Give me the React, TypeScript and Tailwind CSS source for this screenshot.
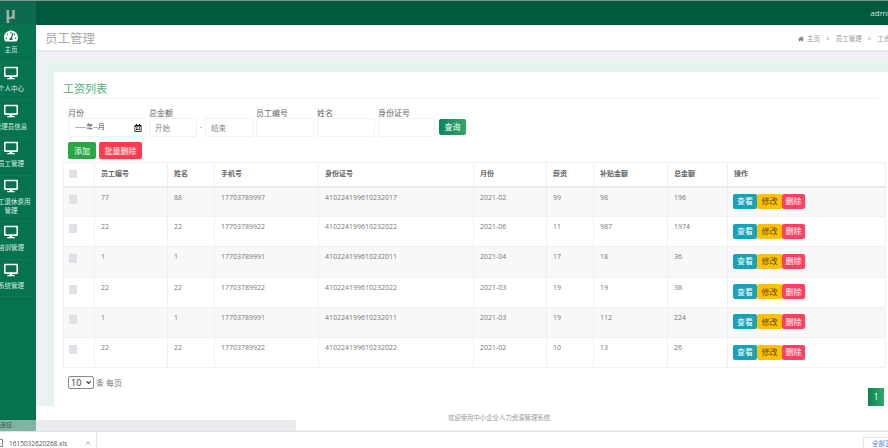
import { ChevronDown, ChevronUp } from 'lucide-react';
import { FaDesktop, FaHome, FaTachometerAlt, FaRegCalendarAlt } from 'react-icons/fa';

const font = { fontFamily: '"Open Sans", "Noto Sans CJK SC", sans-serif' };

const menu = ['个人中心', '管理员信息', '员工管理', '职工退休费用管理', '培训管理', '系统管理'];

const rows = [
  ['77', '88', '17703789997', '410224199610232017', '2021-02', '99', '98', '196'],
  ['22', '22', '17703789922', '410224199610232022', '2021-06', '11', '987', '1974'],
  ['1', '1', '17703789991', '410224199610232011', '2021-04', '17', '18', '36'],
  ['22', '22', '17703789922', '410224199610232022', '2021-03', '19', '19', '38'],
  ['1', '1', '17703789991', '410224199610232011', '2021-03', '19', '112', '224'],
  ['22', '22', '17703789922', '410224199610232022', '2021-02', '10', '13', '26'],
];

const heads = ['员工编号', '姓名', '手机号', '身份证号', '月份', '薪资', '补贴金额', '总金额', '操作'];
const widths = [31, 73, 47, 104, 155, 73, 47, 74, 60, 158];

function Label({ text }: { text: string }) {
  return <span className="block h-[11px] text-[8px] leading-[11px] text-[#666]">{text}</span>;
}

function TextInput({ placeholder, className }: { placeholder?: string; className: string }) {
  return (
    <input
      placeholder={placeholder}
      className={`block h-[19px] rounded-[2px] border border-[#eef4f1] px-[5px] text-[7.5px] outline-none placeholder:text-[#888] ${className}`}
    />
  );
}

export default function App() {
  return (
    <div className="relative flex h-[448px] w-[888px] flex-col overflow-hidden bg-white" style={font}>
      <div className="h-[1px] shrink-0 bg-[#7f9a90]" />
      <div className="flex h-[430px]">
        <aside className="w-[36px] shrink-0 overflow-hidden bg-[#06724f]">
          <div className="flex h-[24px] items-center justify-center bg-[#0d6a4f] pr-[15px] text-[16px] font-bold text-[#a3b3ab]">
            μ
          </div>
          <nav className="-ml-[9px] w-[40px] text-[6.5px] leading-[9px] text-[#d8ede4]">
            <div className="flex flex-col items-center border-b border-white/5 pt-[4px] pb-[8px] text-white">
              <FaTachometerAlt size={14} />
              <span className="mt-[2px] text-center text-[#d8ede4]">主页</span>
            </div>
            {menu.map((label) => (
              <div key={label} className="flex flex-col items-center border-b border-white/5 pt-[3px] pb-[6.5px] text-white">
                <FaDesktop size={14} />
                <span className="mt-[4px] text-center text-[#d8ede4]">{label}</span>
              </div>
            ))}
          </nav>
        </aside>

        <div className="flex min-w-0 flex-1 flex-col">
          <header className="flex h-[24px] shrink-0 items-center justify-end bg-[#005a3e] text-[8px] text-[#d7e6df]">
            <span className="-mr-[6px]">admin</span>
          </header>
          <div className="flex h-[27px] shrink-0 items-center justify-between border-b-2 border-[#e8e9ee] bg-white pl-[9px]">
            <h1 className="pt-[3px] text-[12.5px] font-normal text-[#a9a9a9]">员工管理</h1>
            <div className="flex w-[90px] shrink-0 items-center gap-[6px] overflow-hidden pt-[2px] whitespace-nowrap text-[6.5px] text-[#999]">
              <span className="flex items-center gap-[3px]">
                <FaHome size={6} className="text-[#777]" />
                主页
              </span>
              <span>&gt;</span>
              <span>员工管理</span>
              <span>&gt;</span>
              <span>工资列表</span>
            </div>
          </div>

          <div className="flex-1 overflow-hidden bg-[#eef0f4] pt-[9px] pl-[10px]">
            <div className="h-[345px] bg-[#e6f3ec] pt-[11px] pl-[8px]">
              <div className="h-[334px] bg-white px-[9px] pt-[9px]">
                <h2 className="border-b border-[#f4f4f4] pb-[2px] text-[11px] leading-[15px] font-normal text-[#4fb07c]">
                  工资列表
                </h2>
                <div className="mt-[8px] flex items-end pl-[5px]">
                  <div className="w-[78px]">
                    <Label text="月份" />
                    <div className="flex h-[19px] items-center justify-between rounded-[2px] border border-[#eef4f1] pr-[3px] pl-[6px] text-[7px] text-[#444]">
                      -----年--月
                      <FaRegCalendarAlt size={8} className="text-black" />
                    </div>
                  </div>
                  <div className="ml-[3px] w-[48px]">
                    <Label text="总金额" />
                    <TextInput placeholder="开始" className="w-full" />
                  </div>
                  <span className="w-[8px] pb-[5px] text-center text-[7px] text-[#888]">-</span>
                  <TextInput placeholder="结束" className="w-[49px]" />
                  <div className="ml-[2px] w-[58px]">
                    <Label text="员工编号" />
                    <TextInput className="w-full" />
                  </div>
                  <div className="ml-[3px] w-[58px]">
                    <Label text="姓名" />
                    <TextInput className="w-full" />
                  </div>
                  <div className="ml-[3px] w-[57px]">
                    <Label text="身份证号" />
                    <TextInput className="w-full" />
                  </div>
                  <button className="mb-[2px] ml-[4px] h-[16px] w-[27px] rounded-[2px] bg-gradient-to-r from-[#0b8457] to-[#2fa868] text-[8px] text-white">
                    查询
                  </button>
                </div>
                <div className="mt-[5px] flex gap-[3px] pl-[5px]">
                  <button className="h-[17px] w-[28px] rounded-[2px] bg-[#28a745] text-[8px] text-white">添加</button>
                  <button className="h-[17px] w-[43px] rounded-[2px] bg-[#ff3b50] text-[8px] text-white">批量删除</button>
                </div>

                <table className="mt-[3px] w-[822px] table-fixed border-collapse text-[7px] text-[#777]">
                  <colgroup>
                    {widths.map((w, i) => (
                      <col key={i} style={{ width: w }} />
                    ))}
                  </colgroup>
                  <thead>
                    <tr className="h-[24px] border-b-2 border-[#e8eaef] text-[#666]">
                      <th className="border border-[#eef0f2] pt-[7px] pl-[5px] text-left align-top">
                        <span className="block h-[8px] w-[8px] bg-[#dee1e6]" />
                      </th>
                      {heads.map((h) => (
                        <th key={h} className="border border-[#eef0f2] pl-[6px] text-left font-semibold">
                          {h}
                        </th>
                      ))}
                    </tr>
                  </thead>
                  <tbody>
                    {rows.map((r, i) => (
                      <tr key={i} className={`h-[30.2px] ${i % 2 === 0 ? 'bg-[#f8f8f8]' : 'bg-white'}`}>
                        <td className="border border-[#eef0f2] pt-[7px] pl-[5px] align-top">
                          <span className="block h-[9px] w-[8px] bg-[#dee1e6]" />
                        </td>
                        {r.map((c, j) => (
                          <td key={j} className="border border-[#eef0f2] pt-[5px] pl-[6px] align-top leading-[10px]">
                            {c}
                          </td>
                        ))}
                        <td className="border border-[#eef0f2] pb-[1px] pl-[5px] align-middle">
                          <div className="flex text-[8px]">
                            <span className="flex h-[15px] w-[24px] items-center justify-center rounded-[2px] bg-[#17a2b8] text-white">查看</span>
                            <span className="flex h-[15px] w-[25px] items-center justify-center rounded-[2px] bg-[#ffc107] text-[#5a4a10]">修改</span>
                            <span className="flex h-[15px] w-[23px] items-center justify-center rounded-[2px] bg-[#ff4060] text-white">删除</span>
                          </div>
                        </td>
                      </tr>
                    ))}
                  </tbody>
                </table>

                <div className="mt-[8px] flex w-[822px] items-start justify-between pl-[5px]">
                  <div className="flex items-center gap-[2px] text-[8px] text-[#777]">
                    <span className="relative block h-[13px] w-[26px]">
                      <select className="block h-full w-full appearance-none rounded-[2px] border border-[#888] pl-[2px] text-[9px] leading-[11px] text-[#333] outline-none">
                        <option>10</option>
                      </select>
                      <ChevronDown size={7} strokeWidth={3.5} className="absolute top-[3px] right-[2px] text-[#222]" />
                    </span>
                    条 每页
                  </div>
                  <span className="mt-[12px] mr-[1px] flex h-[18px] w-[16px] items-center justify-center bg-gradient-to-r from-[#0b8457] to-[#2fa868] text-[9px] text-white">
                    1
                  </span>
                </div>
              </div>
            </div>
            <footer className="-ml-[10px] flex h-[24px] items-center justify-center bg-white pl-[74px] text-[6.4px] text-[#999]">
              欢迎使用中小企业人力资源管理系统
            </footer>
          </div>
        </div>
      </div>

      <div className="absolute top-[419.5px] left-0 flex h-[11px] w-[296px] items-center text-[6px]">
        <span className="flex h-full w-[36px] items-center bg-[#7fb5a2] text-[#35564a]">连接...</span>
        <span className="h-full flex-1 rounded-tr-[2px] bg-[#e9ebee]" />
      </div>

      <div className="flex h-[17px] items-start border-t border-[#e4e4e4] bg-white text-[6.5px] text-[#555]">
        <span className="mt-[7px] h-[8px] w-[3px] rounded-r-[1px] border-y border-r border-[#888]" />
        <span className="mt-[7px] w-[81px] pl-[6px] leading-[9px]">1615032620268.xls</span>
        <ChevronUp size={8} className="mt-[7px] text-[#777]" />
        <span className="ml-[4px] h-full border-l border-[#e4e4e4]" />
        <span className="mt-[5px] ml-auto h-[12px] w-[25px] rounded-tl-[2px] border-t border-l border-[#e4e4e4] pt-[1px] pl-[8px] whitespace-nowrap text-[#5a86d8]">
          全部显示
        </span>
      </div>
    </div>
  );
}
